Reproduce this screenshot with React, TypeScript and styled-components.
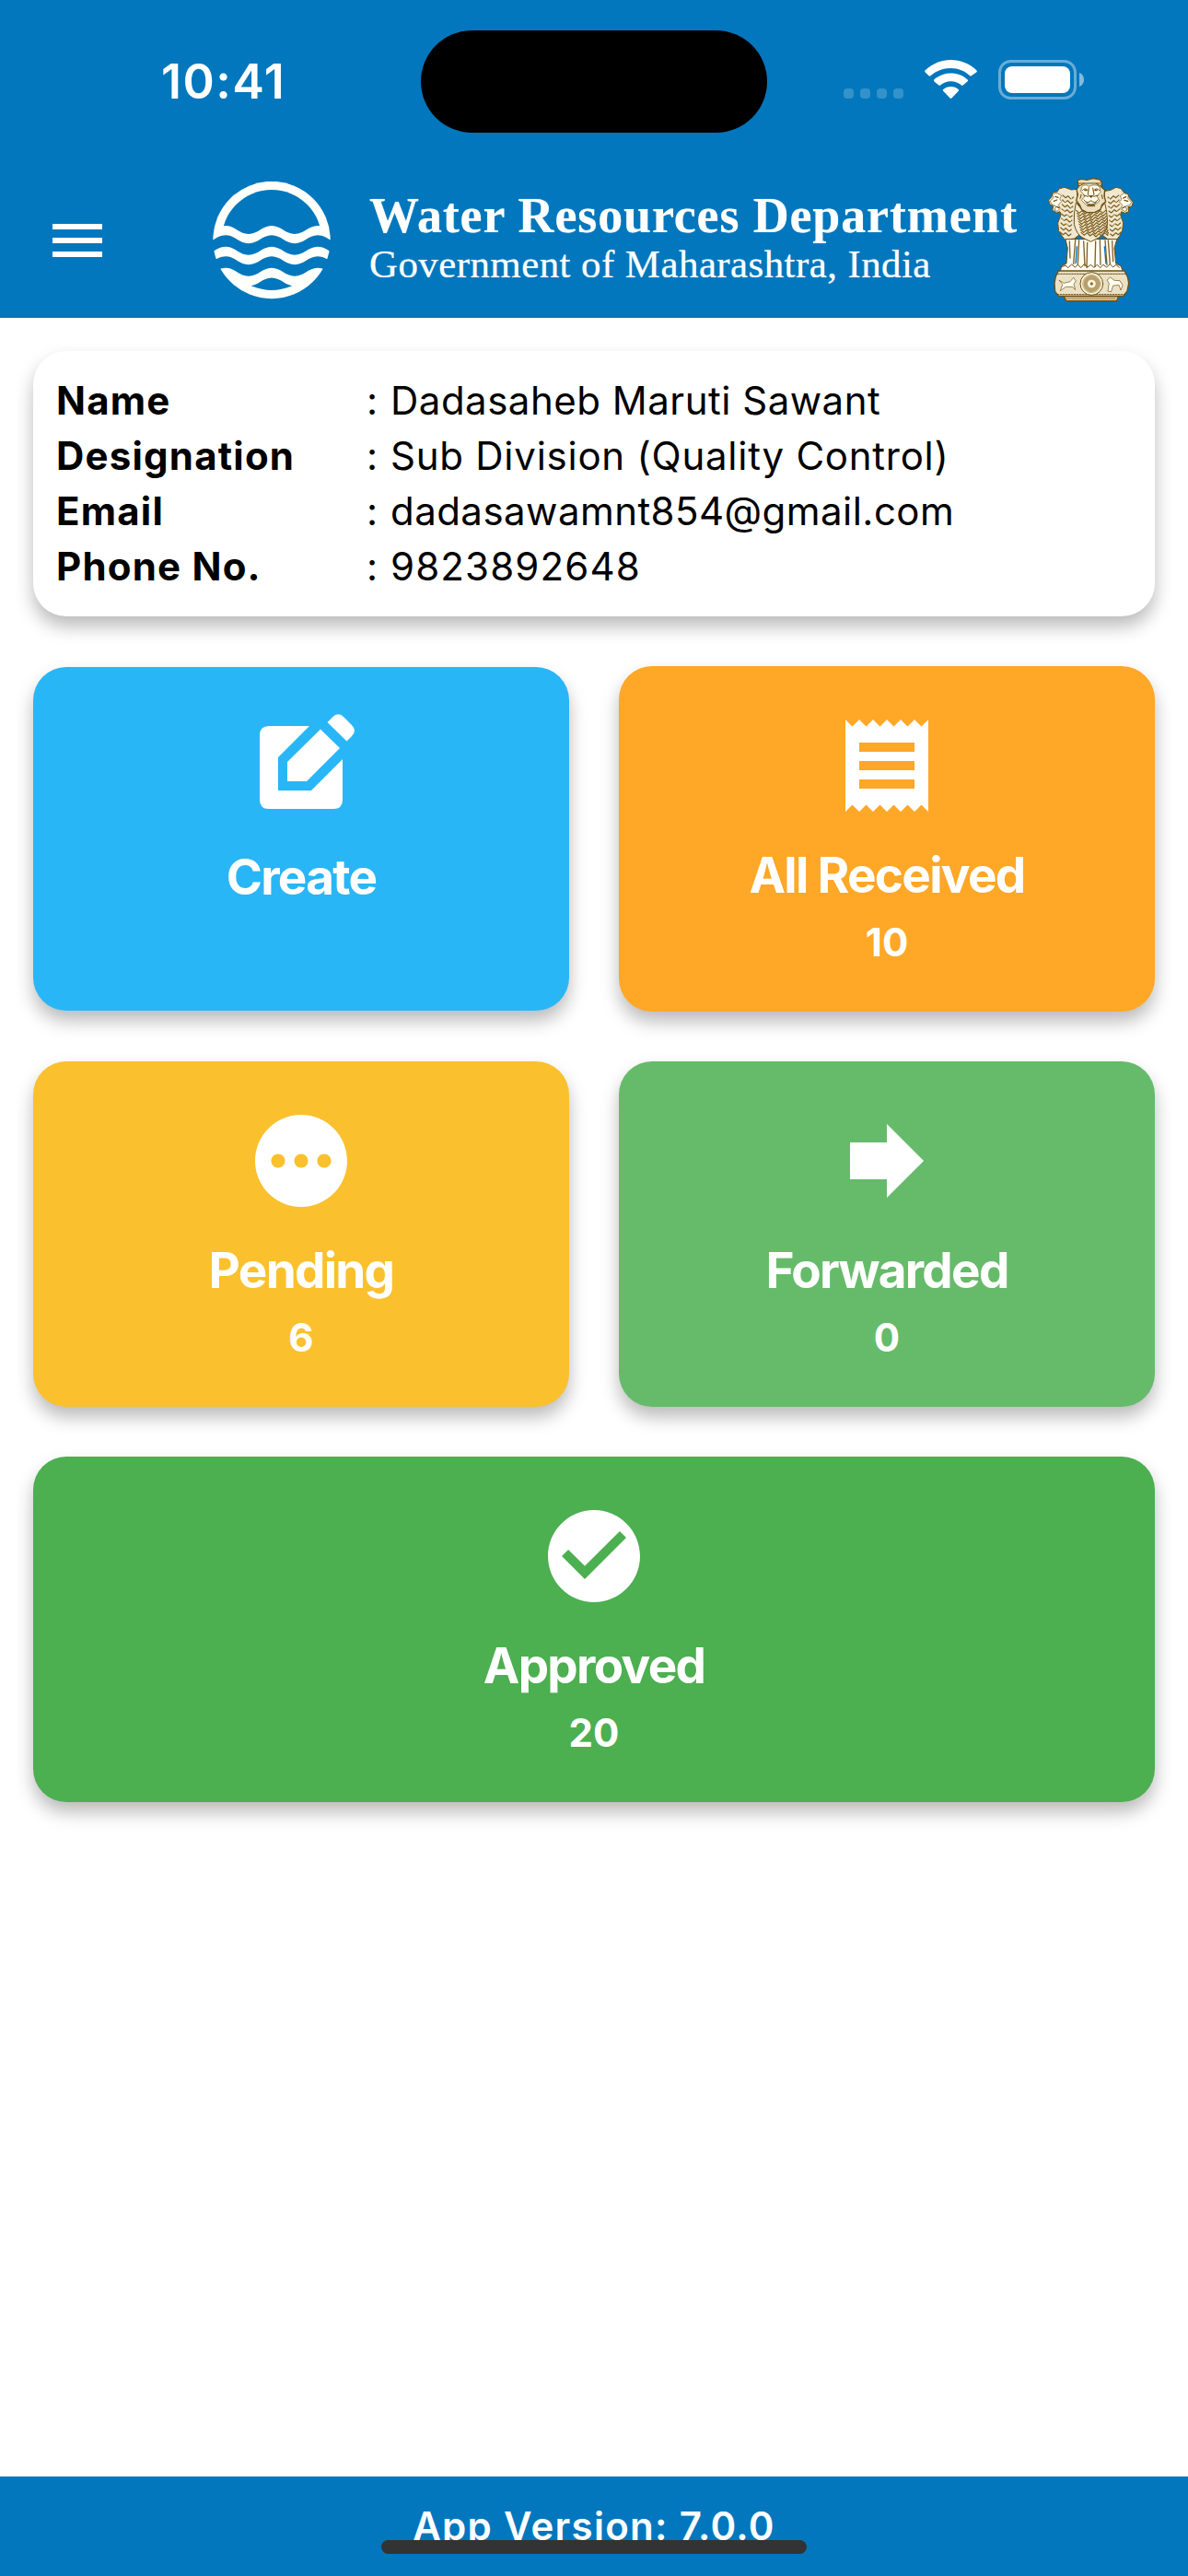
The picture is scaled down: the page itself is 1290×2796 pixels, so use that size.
import React from "react";
import styled, { createGlobalStyle } from "styled-components";

const GlobalStyle = createGlobalStyle`
  *, *::before, *::after { box-sizing: border-box; }
  body { margin: 0; background: #fff; }
`;

const sans = `Inter, "Liberation Sans", sans-serif`;
const serif = `"Liberation Serif", serif`;
const brand = "#0277bd";

const Screen = styled.div`
  width: 1290px;
  height: 2796px;
  display: flex;
  flex-direction: column;
  background: #fff;
  font-family: ${sans};
  overflow: hidden;
`;

const Header = styled.header`
  height: 345px;
  flex: none;
  background: ${brand};
  color: #fff;
`;

const StatusBar = styled.div`
  height: 177px;
  padding-top: 33px;
  display: grid;
  grid-template-columns: 457px 376px 1fr;
`;

const Clock = styled.div`
  padding: 24px 0 0 175px;
  font-size: 52px;
  line-height: 64px;
  font-weight: 600;
  letter-spacing: 1.5px;
`;

const Island = styled.div`
  height: 111px;
  border-radius: 56px;
  background: #000;
`;

const StatusIcons = styled.div`
  display: flex;
  align-items: flex-start;
  padding: 32px 0 0 83px;
`;

const Signal = styled.div`
  display: flex;
  gap: 7px;
  margin: 31px 23px 0 0;
`;

const SignalDot = styled.span`
  width: 11px;
  height: 11px;
  border-radius: 4px;
  background: rgba(255, 255, 255, 0.2);
`;

const WifiGlyph = styled.svg`
  width: 57px;
  height: 42px;
  margin-right: 23px;
`;

const BatteryGlyph = styled.svg`
  width: 94px;
  height: 43px;
`;

const AppBar = styled.div`
  height: 168px;
  display: flex;
  align-items: flex-start;
  padding: 16px 0 0 48px;
`;

const MenuButton = styled.button`
  width: 72px;
  height: 72px;
  margin: 32px 111px 0 0;
  padding: 0;
  border: 0;
  background: none;
  color: #fff;
`;

const Logo = styled.svg`
  width: 128px;
  height: 128px;
  margin-top: 4px;
`;

const Titles = styled.div`
  width: 737px;
  margin-left: 42px;
  padding-top: 11px;
  font-family: ${serif};
  white-space: nowrap;
  text-shadow: 0 0 1px rgba(255, 255, 255, 0.6);
`;

const Department = styled.h1`
  margin: 0;
  font-size: 54px;
  line-height: 60px;
  font-weight: 700;
  letter-spacing: 0.86px;
`;

const Government = styled.p`
  margin: 0;
  font-size: 43px;
  line-height: 46px;
  letter-spacing: 0.4px;
`;

const EmblemArt = styled.svg`
  width: 94px;
  height: 136px;
`;

const Content = styled.main`
  flex: 1;
  padding: 36px 36px 0;
`;

const cardShadow = "0 11px 19px rgba(0, 0, 0, 0.27)";

const ProfileCard = styled.dl`
  margin: 0 0 54px;
  height: 288px;
  padding: 24px 25px;
  border-radius: 36px;
  background: #fff;
  box-shadow: ${cardShadow};
  color: #000;
  font-size: 42px;
  line-height: 60px;
`;

const ProfileRow = styled.div`
  display: grid;
  grid-template-columns: 337px 26px 1fr;
  height: 60px;
  white-space: nowrap;
`;

const Label = styled.dt`
  font-weight: 700;
  letter-spacing: 1.2px;
`;

const Value = styled.dd<{ $spacing: number }>`
  margin: 0;
  letter-spacing: ${(p) => p.$spacing}px;
`;

const Tiles = styled.div`
  display: grid;
  grid-template-columns: 1fr 1fr;
  gap: 54px;
`;

const Tile = styled.section<{ $color: string; $wide?: boolean; $short?: boolean }>`
  grid-column: ${(p) => (p.$wide ? "1 / -1" : "auto")};
  height: ${(p) => (p.$short ? 373 : 375)}px;
  align-self: center;
  padding-top: ${(p) => (p.$short ? 49 : 48)}px;
  display: flex;
  flex-direction: column;
  align-items: center;
  border-radius: 36px;
  background: ${(p) => p.$color};
  box-shadow: ${cardShadow};
  color: #fff;
`;

const TileIcon = styled.svg`
  width: 120px;
  height: 120px;
  flex: none;
  overflow: visible;
`;

const TileTitle = styled.h2`
  margin: 26px 0 0;
  font-size: 53px;
  line-height: 66px;
  font-weight: 700;
  letter-spacing: -1.7px;
`;

const TileCount = styled.div`
  margin-top: 13px;
  font-size: 42px;
  line-height: 54px;
  font-weight: 700;
`;

const Footer = styled.footer`
  position: relative;
  height: 108px;
  flex: none;
  background: ${brand};
  color: #fff;
  text-align: center;
  font-size: 42px;
  line-height: 54px;
  font-weight: 600;
  letter-spacing: 1.3px;
  padding-top: 27px;
`;

const HomeIndicator = styled.div`
  position: absolute;
  left: 414px;
  top: 69px;
  width: 462px;
  height: 15px;
  border-radius: 8px;
  background: #333;
`;

function Wifi() {
  return (
    <WifiGlyph viewBox="0 0 57 42" fill="#fff">
      <path d="M28.5 9C36.4 9 43.7 12 49.2 17.3C49.6 17.7 50.3 17.7 50.7 17.3L56.5 13.2C57 12.6 57 12 56.5 11.4C49 4 39 0 28.5 0S8 4 .5 11.4C0 12 0 12.6.5 13.2L4.600 17.3C5.100 17.800 5.800 17.800 6.300 17.300C12 12 20 9 28.500 9Z" />
      <path d="M28.500 23.300C33 23.300 37 24.900 40 27.600C40.500 28.100 41.100 28.100 41.600 27.600L46.700 23.300C47.200 22.700 47.200 22.100 46.700 21.500C42 17 35.500 14.500 28.500 14.500S15 17 10.300 21.500C9.800 22.100 9.800 22.700 10.300 23.300L15.400 27.600C15.900 28.100 16.500 28.100 17 27.600C20 24.900 24 23.300 28.500 23.300Z" />
      <path d="M36.800 33.800C37.300 33.200 37.300 32.600 36.700 32C34.500 30 31.600 29 28.500 29S22.500 30 20.300 32C19.700 32.600 19.700 33.200 20.200 33.800L27.600 41.500C28.200 42 28.800 42 29.400 41.500Z" />
    </WifiGlyph>
  );
}

function Battery() {
  return (
    <BatteryGlyph viewBox="0 0 94 43">
      <rect x="1.500" y="1.500" width="82" height="40" rx="12" fill="none" stroke="#fff" strokeOpacity="0.4" strokeWidth="3" />
      <rect x="7" y="7" width="71" height="29" rx="8" fill="#fff" />
      <path d="M88 14C91.500 15.300 93 18 93 21.500S91.500 27.700 88 29Z" fill="#fff" fillOpacity="0.5" />
    </BatteryGlyph>
  );
}

/** Left-to-right sine line whose crests sit at y, 9 units above its troughs. */
const waveRight = (y: number) =>
  [-11, 39, 89]
    .map((x) => `C${x + 10} ${y + 9} ${x + 15} ${y} ${x + 25} ${y}S${x + 40} ${y + 9} ${x + 50} ${y + 9}`)
    .join("");
const waveLeft = (y: number) =>
  [139, 89, 39]
    .map((x) => `C${x - 10} ${y + 9} ${x - 15} ${y} ${x - 25} ${y}S${x - 40} ${y + 9} ${x - 50} ${y + 9}`)
    .join("");
const ribbon = (top: number, bottom: number) =>
  `M-11 ${top + 9}${waveRight(top)}L139 ${bottom + 9}${waveLeft(bottom)}Z`;

function WaterLogo() {
  return (
    <Logo viewBox="0 0 128 128">
      <clipPath id="basin">
        <circle cx="64" cy="63.500" r="54.500" />
      </clipPath>
      <circle cx="64" cy="63.500" r="63.700" fill="#fffffb" />
      <g clipPath="url(#basin)" fill={brand}>
        <path d={`M-11 -5V57${waveRight(48)}V-5Z`} />
        <path d={`M-11 114${waveRight(104.600)}V140H-11Z`} />
      </g>
      <path d={ribbon(58.200, 70.700)} fill={brand} />
      <path d={ribbon(81.200, 93.700)} fill={brand} />
    </Logo>
  );
}

const ink = "#6f4e12";
const maneRows = Array.from({ length: 9 }, (_, i) => i);

function Emblem() {
  return (
    <EmblemArt viewBox="54 39 282 408" fill="none" stroke={ink} strokeWidth="3" strokeLinejoin="round" strokeLinecap="round">
      {/* flanking lions */}
      <path fill="#efe7cf" d="M148 76L130 78 108 70 91 74 84 84 70 87 65 102 56 111 59 125 71 131 68 145 83 153 93 149 96 160 86 186 89 212 100 229 109 241 140 237 154 226Z" />
      <path fill="#efe7cf" d="M240 82L258 79 276 70 292 74 300 86 315 92 319 104 331 118 327 132 315 134 317 149 304 154 293 149 290 160 299 186 296 211 286 230 277 241 247 238 232 226Z" />
      <path fill="#fffdf2" strokeWidth="2" d="M69 91L84 89 98 97 92 108 98 116 88 127 94 139 84 148 75 145 80 132 65 124 61 114 71 105ZM315 94L301 89 289 98 294 110 286 117 296 128 290 140 304 148 311 144 306 132 321 127 326 118 315 107Z" />
      <path strokeWidth="4" d="M78 100l9 3M73 115l10-4M83 133l7 4M308 101l-9 4M314 115l-11-3M304 133l-8 5" />
      {/* legs */}
      <path fill="#fffef3" d="M111 240L118 268 114 318 98 326 94 344H298L291 326 275 318 270 268 278 240Z" />
      <path strokeWidth="4" stroke="#80602a" d="M143 242L137 319M155 242L151 322M170 246L174 326M182 250L180 332M209 246L207 328M223 242L225 322M240 243L246 322M250 243L256 319M263 245L266 311M124 246L126 300" />
      <path fill={brand} stroke="none" d="M146 262L150 262 147 316 142 320ZM236 262L240 262 245 318 241 320Z" />
      {/* chest */}
      <path fill="#f1e9d0" d="M145 120Q137 152 139 190Q147 224 168 235L193 247 218 235Q243 219 248 187Q247 150 239 120L220 145H167Z" />
      <g stroke="#7c5b1c" strokeWidth="3.500">
        {maneRows.map((i) => (
          <path
            key={i}
            d={`M${146 + i * 2} ${145 + i * 9}l10 9 9-8 10 10 9-7 10 10 10-10 9 7 10-10 9 8 ${Math.max(2, 10 - i)} -9`}
          />
        ))}
        {maneRows.map((i) => (
          <path
            key={`side-${i}`}
            d={`M${102 - i} ${96 + i * 15}l9 8 8-6 10 10 8-6M${284 + i} ${96 + i * 15}l-9 8-8-6-10 10-8-6`}
          />
        ))}
      </g>
      <path stroke="#fff9df" strokeWidth="2" d="M114 89l11 7 12 24M106 113l15 10 12 20M99 144l16 11 13 24M96 173l15 10 14 22M270 88l-10 8-13 24M281 112l-15 12-14 19M288 144l-16 12-14 23M290 174l-16 11-14 21" />
      {/* central head */}
      <path fill="#eadfbe" strokeWidth="4" d="M150 48L162 43 180 46 201 41 224 45 229 56 227 68 239 79 237 98 242 116 230 127 225 142 207 151 181 152 164 143 157 127 146 113 151 94 147 77 154 67Z" />
      <path fill="#fffced" strokeWidth="2" d="M164 68Q174 57 188 67Q206 57 222 68L225 86 213 99 222 114 207 127H178L163 112 175 98 162 84Z" />
      <path strokeWidth="3" d="M155 57h68M157 65l14-7M225 66l-14-8M166 80q9-12 19 1M202 81q10-13 19-1M187 71l-3 23 10 9 10-9-4-22M170 96l15 4M217 96l-14 4M171 111q11 15 23 2q13 13 22-2M177 119q18 20 34 0M182 131h24M162 94l-3 12M229 95l3 12" />
      <path fill={ink} stroke="none" d="M188 96h13l-6 8ZM181 121q13 7 27 0q-11 15-27 0ZM172 77h9v5h-9ZM206 77h9v5h-9Z" />
      {/* paws */}
      <path strokeWidth="3" d="M98 329l13-5 8 8 12-11 11 9 10-8 9 10 12-13 10 11 10-8 11 9 10-9 10 10 10-10 11 8 11-10 10 10 10-8 10 9" />
      {/* abacus */}
      <path fill="#ebe1c5" strokeWidth="4" d="M88 342H303L313 361 317 382 312 408 299 424H89L77 409 75 382 79 361Z" />
      <path strokeWidth="3" strokeDasharray="5 4" d="M86 352H305M85 419H303" />
      <circle cx="196" cy="384" r="37" fill="#fff7db" />
      <circle cx="196" cy="384" r="29" stroke="#9c8048" strokeWidth="2" />
      <circle cx="196" cy="384" r="20" stroke="#b79f6e" strokeWidth="14" strokeDasharray="1.500 4" />
      <circle cx="196" cy="384" r="5" fill="#927034" stroke="none" />
      <path fill="#fffdf2" strokeWidth="2" d="M91 373L106 382 126 377 137 364 145 375 138 385 143 404 134 394 112 394 94 407 101 387ZM249 407L253 383 246 372 257 363 270 373 288 374 297 389 291 405 285 388 266 390 260 409Z" />
      <path fill="#d7c79c" strokeWidth="4" d="M106 425H283L278 440H113Z" />
      <path strokeWidth="2" strokeDasharray="2 4" d="M114 432H276" />
    </EmblemArt>
  );
}

const icons = {
  create: (
    <g transform="scale(.2)">
      <path d="M69 15H25Q15 15 15 25V95Q15 105 25 105H95Q105 105 105 95V51L71 85H35V49Z" />
      <path d="M45 54L81 18.500 102 39 66 75H45ZM88.500 11L94 5.500Q100-1 106.500 5.500L114.500 13.500Q121 20 115 26L109.500 31.500Z" />
    </g>
  ),
  received: (
    <path d="M18 17H6v-2h12v2zm0-4H6v-2h12v2zm0-4H6V7h12v2zM3 22l1.500-1.500L6 22l1.500-1.500L9 22l1.500-1.500L12 22l1.500-1.500L15 22l1.500-1.500L18 22l1.500-1.500L21 22V2l-1.500 1.500L18 2l-1.500 1.500L15 2l-1.500 1.500L12 2l-1.500 1.500L9 2 7.500 3.500 6 2 4.500 3.500 3 2v20z" />
  ),
  pending: (
    <path d="M12 2C6.480 2 2 6.480 2 12s4.480 10 10 10 10-4.480 10-10S17.520 2 12 2zM7 13.500c-.83 0-1.500-.67-1.500-1.500s.67-1.500 1.500-1.500 1.500.67 1.500 1.500-.67 1.500-1.500 1.500zm5 0c-.83 0-1.500-.67-1.500-1.500s.67-1.500 1.500-1.500 1.500.67 1.500 1.500-.67 1.500-1.500 1.500zm5 0c-.83 0-1.500-.67-1.500-1.500s.67-1.500 1.500-1.500 1.500.67 1.500 1.500-.67 1.500-1.500 1.500z" />
  ),
  forwarded: <path d="M12 8V4l8 8-8 8v-4H4V8z" />,
  approved: (
    <path d="M12 2C6.480 2 2 6.480 2 12s4.480 10 10 10 10-4.480 10-10S17.520 2 12 2zm-2 15l-5-5 1.410-1.410L10 14.170l7.590-7.590L19 8l-9 9z" />
  ),
};

const profile = [
  { label: "Name", value: "Dadasaheb Maruti Sawant", spacing: 0.5 },
  { label: "Designation", value: "Sub Division (Quality Control)", spacing: 0.75 },
  { label: "Email", value: "dadasawamnt854@gmail.com", spacing: 0.45 },
  { label: "Phone No.", value: "9823892648", spacing: 1.15 },
];

const tiles: {
  title: string;
  icon: keyof typeof icons;
  color: string;
  count?: number;
  wide?: boolean;
}[] = [
  { title: "Create", icon: "create", color: "#29b6f6" },
  { title: "All Received", icon: "received", color: "#ffa726", count: 10 },
  { title: "Pending", icon: "pending", color: "#fbc02d", count: 6 },
  { title: "Forwarded", icon: "forwarded", color: "#66bb6a", count: 0 },
  { title: "Approved", icon: "approved", color: "#4caf50", count: 20, wide: true },
];

export default function App() {
  return (
    <Screen>
      <GlobalStyle />
      <Header>
        <StatusBar>
          <Clock>10:41</Clock>
          <Island />
          <StatusIcons>
            <Signal>
              <SignalDot />
              <SignalDot />
              <SignalDot />
              <SignalDot />
            </Signal>
            <Wifi />
            <Battery />
          </StatusIcons>
        </StatusBar>
        <AppBar>
          <MenuButton aria-label="Menu">
            <svg width="72" height="72" viewBox="0 0 24 24" fill="currentColor">
              <path d="M3 18h18v-2H3v2zm0-5h18v-2H3v2zm0-7v2h18V6H3z" />
            </svg>
          </MenuButton>
          <WaterLogo />
          <Titles>
            <Department>Water Resources Department</Department>
            <Government>Government of Maharashtra, India</Government>
          </Titles>
          <Emblem />
        </AppBar>
      </Header>
      <Content>
        <ProfileCard>
          {profile.map((row) => (
            <ProfileRow key={row.label}>
              <Label>{row.label}</Label>
              <span>:</span>
              <Value $spacing={row.spacing}>{row.value}</Value>
            </ProfileRow>
          ))}
        </ProfileCard>
        <Tiles>
          {tiles.map((tile) => (
            <Tile key={tile.title} $color={tile.color} $wide={tile.wide} $short={tile.count === undefined}>
              <TileIcon viewBox="0 0 24 24" fill="currentColor">
                {icons[tile.icon]}
              </TileIcon>
              <TileTitle>{tile.title}</TileTitle>
              {tile.count !== undefined && <TileCount>{tile.count}</TileCount>}
            </Tile>
          ))}
        </Tiles>
      </Content>
      <Footer>
        App Version: 7.0.0
        <HomeIndicator />
      </Footer>
    </Screen>
  );
}
